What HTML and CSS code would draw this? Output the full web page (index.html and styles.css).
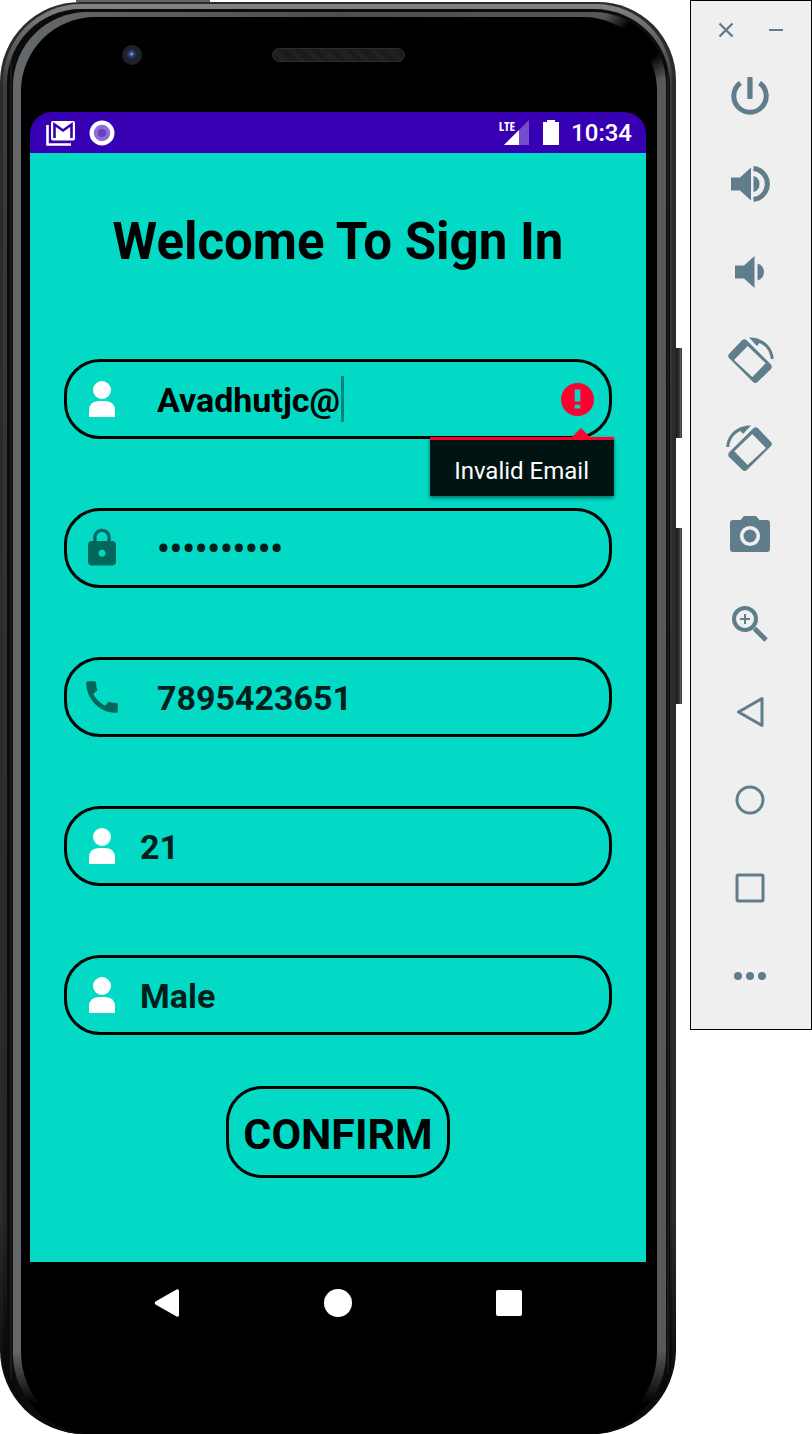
FILE: index.html
```html
<!DOCTYPE html>
<html lang="en">
<head>
<meta charset="utf-8">
<title>Sign In</title>
<link rel="stylesheet" href="styles.css">
</head>
<body>
<svg class="sprite" aria-hidden="true">
  <symbol id="person" viewBox="0 0 42 42"><circle cx="21" cy="12" r="9"/><path d="M8 39V33Q8 23 18 23H24Q34 23 34 33V39Z"/></symbol>
  <symbol id="rotate" viewBox="0 0 48 48">
    <path fill-rule="evenodd" d="M3 18 16 4.300Q18.300 2.300 20.600 4.300L45 28.500Q46.500 30.700 45 33L31.500 46Q29.300 48 27 46L3 22Q1.300 20 3 18ZM8 24 26.300 41 39.700 27.300 21.700 10Z"/>
    <path d="M23 1.500C36 1 47 10 47.700 23H44.800C44 15 39.500 9.500 33.500 7L31 10Z"/>
  </symbol>
</svg>
<main class="emulator">
  <div class="device">
    <div class="rim"><div class="metal"><div class="groove"><div class="shine"><div class="face">
      <header class="top-bezel"><span class="camera"></span><span class="speaker"></span></header>
      <div class="screen">
        <div class="status">
          <svg width="30" height="26" viewBox="0 0 30 26" fill="none"><path d="M1.500 5V24.500H25" stroke="#fff" stroke-width="2.600"/><rect x="5" y="1" width="24" height="19.500" rx="2" fill="#fff"/><path d="M8.500 18V4.500L17 10.500 25.500 4.500V18" stroke="#3700b3" stroke-width="2.600"/></svg>
          <svg width="26" height="26" viewBox="0 0 26 26"><circle cx="13" cy="13" r="12.500" fill="#fff"/><circle cx="13" cy="13" r="8.200" fill="#8e6ad3"/><circle cx="13" cy="13" r="4" fill="#6b3cc4"/></svg>
          <span class="signal"><span class="lte">LTE</span><svg width="25" height="25" viewBox="0 0 25 25"><path d="M25 0V25H0Z" fill="#fff" opacity=".3"/><path d="M15 10V25H0Z" fill="#fff"/></svg></span>
          <svg width="16" height="25" viewBox="0 0 16 25"><path d="M4 2V0H12V2H16V25H0V2Z" fill="#fff"/></svg>
          <time class="clock">10:34</time>
        </div>
        <form class="form">
          <h1 class="title">Welcome To Sign In</h1>
          <div class="field wide">
            <svg class="icon white"><use href="#person"/></svg>
            <input class="input email" type="text" aria-label="Email" value="Avadhutjc@"><span class="caret"></span>
            <svg class="error-icon" viewBox="2 2 20 20"><path d="M12 2C6.480 2 2 6.480 2 12s4.480 10 10 10 10-4.480 10-10S17.520 2 12 2zm1.700 15.500h-3.400v-2.300h3.400v2.300zm0-4.300h-3.400V6h3.400v7.200z"/></svg>
            <div class="tip" role="alert">Invalid Email</div>
          </div>
          <div class="field wide">
            <svg class="icon" viewBox="0 0 24 24"><path d="M18 8h-1V6c0-2.760-2.240-5-5-5S7 3.240 7 6v2H6c-1.100 0-2 .900-2 2v10c0 1.100.900 2 2 2h12c1.100 0 2-.900 2-2V10c0-1.100-.900-2-2-2zm-6 9c-1.100 0-2-.900-2-2s.900-2 2-2 2 .900 2 2-.900 2-2 2zm3.100-9H8.900V6c0-1.710 1.390-3.100 3.100-3.100s3.100 1.390 3.100 3.100v2z"/></svg>
            <input class="input password" type="password" aria-label="Password" value="password12">
          </div>
          <div class="field wide">
            <svg class="icon" viewBox="0 0 24 24"><path d="M20.010 15.380c-1.230 0-2.420-.200-3.530-.560-.350-.120-.740-.030-1.010.240l-1.570 1.970c-2.830-1.350-5.480-3.900-6.890-6.830l1.950-1.660c.270-.280.350-.670.240-1.020-.370-1.110-.560-2.300-.560-3.530 0-.540-.450-.990-.990-.990H4.190C3.650 3 3 3.240 3 3.990 3 13.280 10.730 21 20.010 21c.710 0 .990-.630.990-1.180v-3.450c0-.540-.450-.990-.990-.990z"/></svg>
            <input class="input" type="tel" aria-label="Phone" value="7895423651">
          </div>
          <div class="field">
            <svg class="icon white"><use href="#person"/></svg>
            <input class="input" type="text" aria-label="Age" value="21">
          </div>
          <div class="field">
            <svg class="icon white"><use href="#person"/></svg>
            <input class="input" type="text" aria-label="Gender" value="Male">
          </div>
          <button class="confirm" type="button">CONFIRM</button>
        </form>
        <nav class="nav">
          <button class="nav-button" type="button" aria-label="Back"><svg width="28" height="28" viewBox="0 0 28 28"><path d="M2.500 12.500 24 .300Q26 0 26 2V26Q26 28.300 24 27.700L2.500 15.500Q1 14 2.500 12.500Z"/></svg></button>
          <button class="nav-button" type="button" aria-label="Home"><svg width="28" height="28" viewBox="0 0 28 28"><circle cx="14" cy="14" r="14"/></svg></button>
          <button class="nav-button" type="button" aria-label="Recent apps"><svg width="28" height="28" viewBox="0 0 28 28"><rect x="1" y="1" width="26" height="26" rx="2"/></svg></button>
        </nav>
      </div>
    </div></div></div></div></div>
    <span class="side-key power-key"></span>
    <span class="side-key volume-key"></span>
  </div>
  <aside class="toolbar">
    <div class="window-row">
      <button class="window-button" type="button" aria-label="Close"><svg width="16" height="16" viewBox="0 0 16 16"><path d="M1.500 1.500 14.500 14.500M14.500 1.500 1.500 14.500" stroke="#607d8b" stroke-width="2.400"/></svg></button>
      <button class="window-button" type="button" aria-label="Minimize"><svg width="16" height="16" viewBox="0 0 16 16"><path d="M1 8H15" stroke="#607d8b" stroke-width="2"/></svg></button>
    </div>
    <button class="tool" type="button" aria-label="Power"><svg viewBox="0 0 48 48"><path d="M14.400 10.900A16.200 16.200 0 1 0 33.600 10.900" fill="none" stroke="#607d8b" stroke-width="5"/><rect x="21.300" y="5" width="5.300" height="22" rx="1"/></svg></button>
    <button class="tool" type="button" aria-label="Volume up"><svg viewBox="0 0 48 48"><path d="M5 17.500H14L25 7.500V40.500L14 30.500H5Z"/><path d="M27.500 16Q33.500 17.500 33.500 24T27.500 32Z"/><path d="M27.500 8.500A15.600 15.600 0 0 1 27.500 39.500" fill="none" stroke="#607d8b" stroke-width="5"/></svg></button>
    <button class="tool" type="button" aria-label="Volume down"><svg viewBox="0 0 48 48"><path d="M9 17.500H18L28.500 8V40L18 30.500H9Z"/><path d="M31.500 15.500Q38 17.500 38 24T31.500 32.500Z"/></svg></button>
    <button class="tool" type="button" aria-label="Rotate left"><svg><use href="#rotate"/></svg></button>
    <button class="tool" type="button" aria-label="Rotate right"><svg class="mirrored"><use href="#rotate"/></svg></button>
    <button class="tool" type="button" aria-label="Take screenshot"><svg viewBox="0 0 48 48"><path d="M7 8H14.500L18 4H30L33.500 8H41Q44 8 44 11V37Q44 40 41 40H7Q4 40 4 37V11Q4 8 7 8Z"/><circle cx="24" cy="24" r="8.300" fill="none" stroke="#efefef" stroke-width="3.600"/></svg></button>
    <button class="tool" type="button" aria-label="Zoom"><svg viewBox="0 0 48 48"><g fill="none" stroke="#607d8b"><circle cx="19" cy="19" r="11" stroke-width="4"/><path d="M14 19H24M19 14V24" stroke-width="2"/><path d="M28.500 28.500 40 40" stroke-width="5"/></g></svg></button>
    <button class="tool" type="button" aria-label="Back"><svg viewBox="0 0 48 48"><path d="M12.500 24 36 10.500V37.500Z" fill="none" stroke="#607d8b" stroke-width="3" stroke-linejoin="round"/></svg></button>
    <button class="tool" type="button" aria-label="Home"><svg viewBox="0 0 48 48"><circle cx="24" cy="24" r="13" fill="none" stroke="#607d8b" stroke-width="3"/></svg></button>
    <button class="tool" type="button" aria-label="Overview"><svg viewBox="0 0 48 48"><rect x="11" y="11" width="26" height="26" rx="1.500" fill="none" stroke="#607d8b" stroke-width="3"/></svg></button>
    <button class="tool" type="button" aria-label="More"><svg viewBox="0 0 48 48"><circle cx="12" cy="24" r="4"/><circle cx="24" cy="24" r="4"/><circle cx="36" cy="24" r="4"/></svg></button>
  </aside>
</main>
</body>
</html>
```

FILE: styles.css
```css
* { box-sizing: border-box; }
body { margin: 0; background: #fff; font-family: Roboto, "Liberation Sans", sans-serif; }
svg { display: block; flex: none; }
button { margin: 0; padding: 0; border: 0; background: none; font-family: inherit; }
.sprite { position: absolute; width: 0; height: 0; }
.emulator { display: flex; align-items: flex-start; gap: 8px; }

/* Phone body: nested layers form the metal edge */
.device { position: relative; flex: 1; min-width: 0; padding: 2px 6px 0 0; }
.device::before { content: ""; position: absolute; top: 0; left: 76px; width: 134px; height: 2px; background: #62645f; }
.rim { padding: 2px 4px 0 3px; border-radius: 80px 78px 84px 84px; background: linear-gradient(#2a2b2b 85%, #0c0c0d 96%); }
.metal { padding: 5px 2px 0 4px; border-radius: 78px 76px 82px 82px; background: linear-gradient(#808285, #3b3c3d 80px, #242526 85%, #0a0a0a 94%); }
.groove { padding: 3px 4px 0 6px; border-radius: 74px 76px 80px 80px; background: linear-gradient(90deg, #0b0b0c 3px, #2c2c2d 4px, #0b0b0c 5px calc(100% - 3px), #2c2c2d calc(100% - 2px), #0b0b0c calc(100% - 1px)); }
.shine { padding: 5px 9px 0 8px; border-radius: 74px 72px 80px 80px; background: radial-gradient(circle at calc(100% - 24px) 28px, #000 20px, transparent 44px), linear-gradient(transparent calc(100% - 84px), #000 calc(100% - 30px)), linear-gradient(90deg, #66696b, #4d4e50 50%, #58595a); }
.face { padding: 0 11px 91px 9px; border-radius: 74px 74px 82px 82px; background: #000; }
.top-bezel { display: grid; grid-template-columns: 1fr 133px 1fr; align-items: start; height: 95px; padding-top: 28px; }
.camera { width: 20px; height: 20px; margin-left: 92px; border-radius: 50%; background: radial-gradient(circle at 48% 45%, #7890b8 1px, #34477c 2px, #1a234b 5px, #202124 6px); }
.speaker { grid-column: 2; height: 14px; margin-top: 3px; border: 1px solid #2c2d2d; border-radius: 7px; background: repeating-linear-gradient(45deg, #151616 0 1px, #252626 1px 2px); }
.side-key { position: absolute; right: 0; width: 6px; background: linear-gradient(90deg, #181818, #3a3a3a 60%, #626262 80%, #222); }
.power-key { top: 348px; height: 90px; }
.volume-key { top: 528px; height: 176px; }

/* Screen */
.screen { overflow: hidden; border-radius: 22px; }
.status { display: flex; align-items: center; height: 41px; padding: 0 14px 0 16px; background: #3700b3; color: #fff; }
.status > svg:nth-child(2) { margin-left: 13px; }
.signal { position: relative; margin-left: auto; margin-right: 14px; }
.lte { position: absolute; right: 14px; top: 0; font: 700 13px/12px "Open Sans", sans-serif; font-stretch: condensed; }
.clock { margin-left: 12px; font-size: 24px; line-height: 28px; font-weight: 500; }
.form { display: flex; flex-direction: column; padding: 58px 34px 84px; background: #03dac5; }
.title { margin: 0 0 86px; font-size: 51px; line-height: 62px; font-weight: 700; text-align: center; white-space: nowrap; }
.field { position: relative; display: flex; align-items: center; gap: 17px; height: 80px; margin-bottom: 69px; padding: 0 15px 0 14px; border: 3px solid #000; border-radius: 36px; }
.wide .input { margin-left: 17px; }
.icon { width: 42px; height: 42px; fill: #01665c; }
.white { fill: #fff; }
.input { flex: 1; min-width: 0; height: 50px; padding: 2px 0 0; border: 0; outline: 0; background: none; color: #001f1c; font: 700 34px/40px Roboto, sans-serif; }
.password { font-size: 35px; }
.wide .email { flex: none; width: 184px; margin-right: -17px; color: #000; }
.caret { width: 3px; height: 46px; background: #028478; }
.error-icon { width: 33px; height: 33px; margin-left: auto; fill: #ff0031; }
.tip { position: absolute; z-index: 1; top: 75px; right: -5px; padding: 15px 25px 9px 24px; border-top: 3px solid #ff0031; background: #001412; box-shadow: 0 2px 4px rgba(0, 0, 0, .5); color: #fff; font-size: 24px; line-height: 32px; }
.tip::before { content: ""; position: absolute; right: 23px; bottom: 100%; border: 10px solid transparent; border-top: 0; border-bottom-color: #ff0031; margin-bottom: 2px; }
.confirm { align-self: center; width: 224px; height: 92px; margin-top: -18px; padding-top: 4px; border: 3px solid #000; border-radius: 36px; color: #000; font-size: 43px; line-height: 52px; font-weight: 700; }
.nav { display: flex; justify-content: space-between; align-items: center; height: 81px; padding: 0 113px; background: #000; }
.nav-button { padding: 10px; }
.nav-button svg { fill: #fff; }

/* Emulator controls */
.toolbar { flex: none; width: 122px; padding: 0 2px 9px 0; border: 1px solid #000; background: #efefef; }
.window-row { display: flex; justify-content: center; gap: 34px; height: 51px; padding: 21px 0 0 2px; }
.window-button { height: 16px; }
.tool { display: flex; align-items: center; justify-content: center; width: 100%; height: 88px; }
.tool svg { width: 48px; height: 48px; fill: #607d8b; }
.tool .mirrored { transform: scaleX(-1); }
```
